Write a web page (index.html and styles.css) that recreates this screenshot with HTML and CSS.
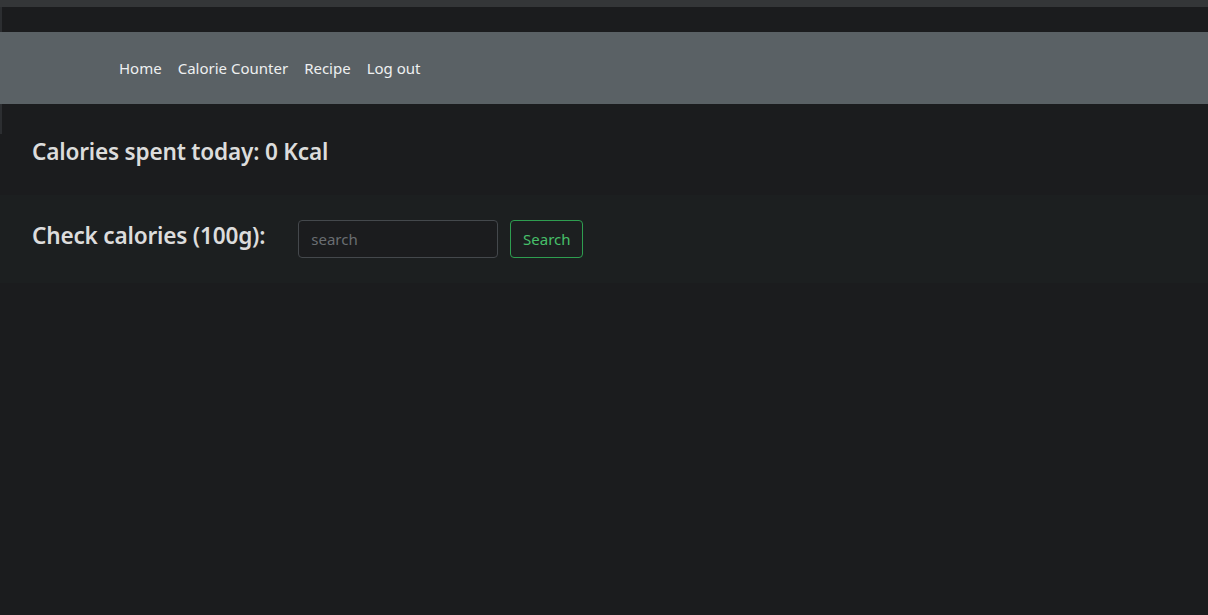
FILE: index.html
```html
<!DOCTYPE html>
<html lang="en">
<head>
<meta charset="utf-8">
<title>Calorie Counter</title>
<link rel="stylesheet" href="styles.css">
</head>
<body>
<div class="topstrip"></div>
<div class="spacer"></div>
<nav class="navbar">
  <a class="nav-link" href="#">Home</a>
  <a class="nav-link" href="#">Calorie Counter</a>
  <a class="nav-link" href="#">Recipe</a>
  <a class="nav-link" href="#">Log out</a>
</nav>
<section class="spent">
  <h3 class="title spent-title">Calories spent today: 0 Kcal</h3>
</section>
<section class="check">
  <h3 class="title check-title">Check calories (100g):</h3>
  <form class="search-form">
    <input class="search-input" type="text" placeholder="search">
    <button class="search-btn" type="button">Search</button>
  </form>
</section>
</body>
</html>
```
FILE: styles.css
```css
html, body {
  margin: 0;
  padding: 0;
}
body {
  background: #1b1c1e;
  font-family: "Noto Sans", "Open Sans", sans-serif;
  color: #dee2e6;
  min-height: 615px;
}
.topstrip {
  height: 7px;
  background: #343638;
}
.spacer {
  height: 25px;
  background: linear-gradient(#2c2e31, #2c2e31) no-repeat 0 0 / 2px 100%;
}
.navbar {
  height: 72px;
  background: #5a6165;
  display: flex;
  align-items: center;
  padding-left: 111px;
}
.nav-link {
  color: #eef0f1;
  text-decoration: none;
  font-size: 15px;
  padding: 0 8px;
  line-height: 24px;
}
.spent {
  height: 91px;
  display: flex;
  align-items: center;
  padding-left: 32px;
  background: linear-gradient(#2c2e31, #2c2e31) no-repeat 0 0 / 2px 30px;
}
.title {
  margin: 0;
  font-size: 22.6px;
  font-weight: 600;
  color: #dcdcdc;
  letter-spacing: -0.2px;
}
.spent-title {
  margin-top: 4px;
}
.check {
  height: 88px;
  background: #1c1f20;
  display: flex;
  align-items: center;
  padding-left: 32px;
  gap: 33px;
}
.check-title {
  margin-bottom: 7px;
}
.search-form {
  display: flex;
  gap: 12px;
}
.search-input {
  width: 200px;
  height: 38px;
  box-sizing: border-box;
  background: #1b1c1e;
  border: 1px solid #44484c;
  border-radius: 4px;
  padding: 0 12px;
  color: #dee2e6;
  font-family: inherit;
  font-size: 15px;
  outline: none;
}
.search-input::placeholder {
  color: #6a6e72;
}
.search-btn {
  height: 38px;
  width: 73px;
  box-sizing: border-box;
  background: transparent;
  border: 1px solid #2e9e50;
  border-radius: 4px;
  color: #47c06a;
  font-family: inherit;
  font-size: 15px;
  padding: 0;
}
```
